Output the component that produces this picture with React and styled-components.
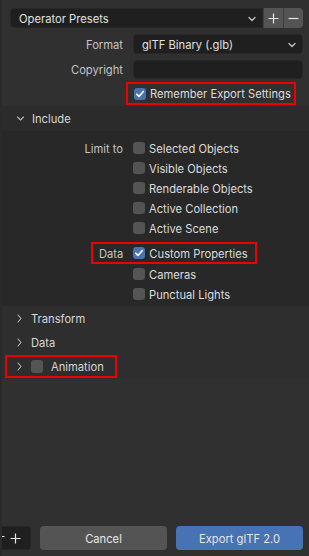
import React from "react";
import styled, { createGlobalStyle } from "styled-components";

const Global = createGlobalStyle`
  html, body { margin: 0; padding: 0; background: #303030; }
  body {
    font-family: Inter, "Noto Sans", "DejaVu Sans", sans-serif;
    font-size: 11.2px;
    color: #dcdcdc;
    -webkit-font-smoothing: antialiased;
  }
`;

const Page = styled.div`
  width: 309px;
  height: 556px;
  display: flex;
  flex-direction: column;
  background: #303030;
  border-left: 2px solid #2a2a2a;
  box-sizing: border-box;
  overflow: hidden;
`;

const Top = styled.div`
  display: flex;
  flex-direction: column;
  padding: 8px 6px 1px 8px;
`;

const PresetBar = styled.div`
  display: flex;
  height: 20px;
  margin-bottom: 6px;
`;

const Select = styled.div`
  flex: 1;
  display: flex;
  align-items: center;
  justify-content: space-between;
  padding: 1px 6px 0 8px;
  background: #1f1f1f;
  border: 1px solid #272727;
  border-radius: ${(p) => (p.$joined ? "4px 0 0 4px" : "4px")};
  color: #e0e0e0;
  box-sizing: border-box;
  height: 100%;
`;

const IconBtn = styled.div`
  width: 19px;
  height: 20px;
  display: flex;
  align-items: center;
  justify-content: center;
  background: #545454;
  border-left: 1px solid #3e3e3e;
  border-radius: ${(p) => (p.$last ? "0 4px 4px 0" : "0")};
  color: #e6e6e6;
`;

const Row = styled.div`
  display: grid;
  grid-template-columns: 113px 1fr;
  column-gap: 10px;
  align-items: center;
  height: ${(p) => p.$h || 20}px;
  margin-top: ${(p) => p.$mt || 0}px;
  margin-bottom: ${(p) => p.$mb || 0}px;
`;

const Label = styled.div`
  text-align: right;
  color: #c4c4c4;
  white-space: nowrap;
  padding-top: 1px;
`;

const Field = styled.div`
  height: 19px;
  background: #1f1f1f;
  border: 1px solid #272727;
  border-radius: 4px;
  box-sizing: border-box;
`;

const Box = styled.span`
  width: 12px;
  height: 12px;
  flex: none;
  border-radius: 3px;
  background: ${(p) => (p.$on ? "#4772b3" : "#545454")};
  display: inline-flex;
  align-items: center;
  justify-content: center;
`;

const Check = styled.label`
  display: flex;
  align-items: center;
  gap: 4px;
  color: #dcdcdc;
  white-space: nowrap;
  & > span:last-child {
    padding-top: 1px;
  }
`;

const Mark = styled.div`
  display: flex;
  align-items: center;
  gap: ${(p) => p.$gap || 0}px;
  border: 2px solid #ee0000;
  height: ${(p) => p.$h || 23}px;
  box-sizing: border-box;
  margin-left: ${(p) => p.$ml || 0}px;
  padding: ${(p) => p.$pad || "0"};
  width: ${(p) => (p.$w ? p.$w + "px" : "auto")};
  justify-self: start;
`;

const PanelHead = styled.div`
  display: flex;
  align-items: center;
  gap: 7px;
  height: ${(p) => p.$h || 24}px;
  padding-left: ${(p) => (p.$pl !== undefined ? p.$pl : 13)}px;
  background: ${(p) => p.$bg || "#2e2e2e"};
  color: #d6d6d6;
  & span {
    padding-top: 1px;
  }
`;

const PanelBody = styled.div`
  background: #282828;
  padding: 7px 6px 2px 8px;
`;

const Gap = styled.div`
  flex: 1;
`;

const Footer = styled.div`
  display: flex;
  gap: 9px;
  padding: 0 6px 6px 0;
  height: 24px;
`;

const Btn = styled.div`
  flex: 1;
  display: flex;
  align-items: center;
  justify-content: center;
  padding-top: 1px;
  box-sizing: border-box;
  border-radius: 4px;
  background: ${(p) => p.$bg};
  color: #e6e6e6;
`;

const SmallBtn = styled.div`
  width: 31px;
  margin-left: -2px;
  display: flex;
  align-items: center;
  justify-content: space-between;
  padding-right: 9px;
  box-sizing: border-box;
  border-radius: 0 4px 4px 0;
  background: #1f1f1f;
  border: 1px solid #262626;
  border-left: none;
  overflow: hidden;
`;

const Tick = () => (
  <svg width="10" height="10" viewBox="0 0 10 10">
    <path d="M1.8 5.2 L4 7.4 L8.3 2.4" fill="none" stroke="#fff" strokeWidth="1.6" strokeLinecap="round" strokeLinejoin="round" />
  </svg>
);

const Chevron = ({ down }) => (
  <svg width="9" height="9" viewBox="0 0 9 9" style={{ flex: "none" }}>
    <path
      d={down ? "M1.5 3 L4.5 6 L7.5 3" : "M3 1 L6 4.5 L3 8"}
      fill="none"
      stroke="#b8b8b8"
      strokeWidth="1.1"
      strokeLinecap="round"
      strokeLinejoin="round"
    />
  </svg>
);

const SmallDown = () => (
  <svg width="8" height="6" viewBox="0 0 8 6">
    <path d="M1 1.5 L4 4.5 L7 1.5" fill="none" stroke="#c8c8c8" strokeWidth="1.2" strokeLinecap="round" strokeLinejoin="round" />
  </svg>
);

const Plus = ({ size = 11 }) => (
  <svg width={size} height={size} viewBox="0 0 11 11">
    <path d="M5.5 0.5 V10.5 M0.5 5.5 H10.5" stroke="#e6e6e6" strokeWidth="1.2" />
  </svg>
);

const Minus = () => (
  <svg width="11" height="11" viewBox="0 0 11 11">
    <path d="M0.5 5.5 H10.5" stroke="#e6e6e6" strokeWidth="1.2" />
  </svg>
);

const CheckItem = ({ on, children }) => (
  <Check>
    <Box $on={on}>{on && <Tick />}</Box>
    <span>{children}</span>
  </Check>
);

const limitTo = ["Selected Objects", "Visible Objects", "Renderable Objects", "Active Collection", "Active Scene"];

export default function App() {
  return (
    <>
      <Global />
      <Page>
        <Top>
          <PresetBar>
            <Select $joined>
              <span>Operator Presets</span>
              <SmallDown />
            </Select>
            <IconBtn><Plus /></IconBtn>
            <IconBtn $last><Minus /></IconBtn>
          </PresetBar>
          <Row $h={20} $mb={5}>
            <Label>Format</Label>
            <Select>
              <span>glTF Binary (.glb)</span>
              <SmallDown />
            </Select>
          </Row>
          <Row $h={20} $mb={3}>
            <Label>Copyright</Label>
            <Field />
          </Row>
          <Row $h={23}>
            <span />
            <Mark $ml={-7} $pad="0 3px 0 6px">
              <CheckItem on>Remember Export Settings</CheckItem>
            </Mark>
          </Row>
        </Top>

        <PanelHead $h={25} $bg="#2b2b2b" $pl={14}>
          <Chevron down />
          <span>Include</span>
        </PanelHead>
        <PanelBody>
          {limitTo.map((t, i) => (
            <Row key={t}>
              <Label>{i === 0 ? "Limit to" : ""}</Label>
              <CheckItem>{t}</CheckItem>
            </Row>
          ))}
          <Row $h={22} $mt={4}>
            <span />
            <Mark $ml={-42} $h={22} $gap={10} $pad="0 7px 0 6px">
              <Label>Data</Label>
              <CheckItem on>Custom Properties</CheckItem>
            </Mark>
          </Row>
          <Row>
            <span />
            <CheckItem>Cameras</CheckItem>
          </Row>
          <Row>
            <span />
            <CheckItem>Punctual Lights</CheckItem>
          </Row>
        </PanelBody>

        <PanelHead $h={25}>
          <Chevron />
          <span>Transform</span>
        </PanelHead>
        <PanelHead $h={23}>
          <Chevron />
          <span>Data</span>
        </PanelHead>
        <PanelHead $h={25} $pl={3}>
          <Mark $w={112} $gap={7} $pad="0 0 0 8px">
            <Chevron />
            <Box />
            <span style={{ marginLeft: 1 }}>Animation</span>
          </Mark>
        </PanelHead>

        <Gap />

        <Footer>
          <SmallBtn>
            <span style={{ marginLeft: -6, paddingTop: 0 }}><Minus /></span>
            <Plus />
          </SmallBtn>
          <Btn $bg="#545454">Cancel</Btn>
          <Btn $bg="#4772b3">Export glTF 2.0</Btn>
        </Footer>
      </Page>
    </>
  );
}
